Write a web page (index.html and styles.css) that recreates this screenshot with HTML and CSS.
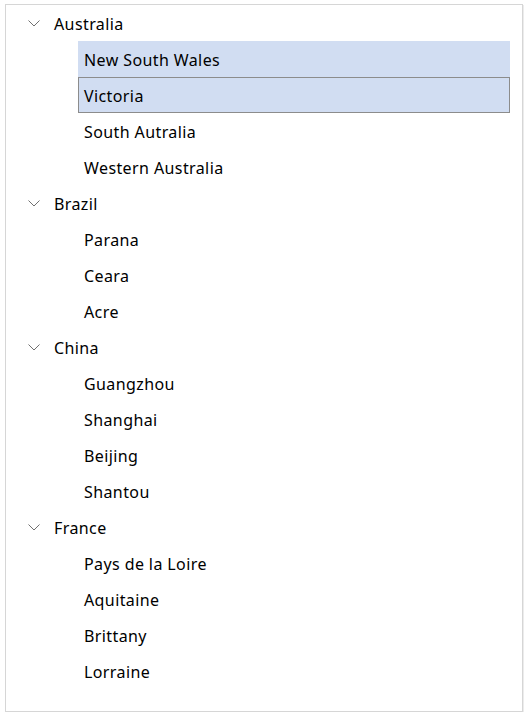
FILE: index.html
```html
<!DOCTYPE html>
<html>
<head>
<meta charset="utf-8">
<link rel="stylesheet" href="styles.css">
</head>
<body>
<div class="tree">
  <div class="group">
    <div class="row head"><svg class="chev" viewBox="0 0 12 7" width="12" height="7"><path d="M0.5 0.5 L6 6 L11.5 0.5" fill="none" stroke="#707070" stroke-width="1"/></svg><span>Australia</span></div>
    <div class="row child selected"><span>New South Wales</span></div>
    <div class="row child selected focused"><span>Victoria</span></div>
    <div class="row child"><span>South Autralia</span></div>
    <div class="row child"><span>Western Australia</span></div>
  </div>
  <div class="group">
    <div class="row head"><svg class="chev" viewBox="0 0 12 7" width="12" height="7"><path d="M0.5 0.5 L6 6 L11.5 0.5" fill="none" stroke="#707070" stroke-width="1"/></svg><span>Brazil</span></div>
    <div class="row child"><span>Parana</span></div>
    <div class="row child"><span>Ceara</span></div>
    <div class="row child"><span>Acre</span></div>
  </div>
  <div class="group">
    <div class="row head"><svg class="chev" viewBox="0 0 12 7" width="12" height="7"><path d="M0.5 0.5 L6 6 L11.5 0.5" fill="none" stroke="#707070" stroke-width="1"/></svg><span>China</span></div>
    <div class="row child"><span>Guangzhou</span></div>
    <div class="row child"><span>Shanghai</span></div>
    <div class="row child"><span>Beijing</span></div>
    <div class="row child"><span>Shantou</span></div>
  </div>
  <div class="group">
    <div class="row head"><svg class="chev" viewBox="0 0 12 7" width="12" height="7"><path d="M0.5 0.5 L6 6 L11.5 0.5" fill="none" stroke="#707070" stroke-width="1"/></svg><span>France</span></div>
    <div class="row child"><span>Pays de la Loire</span></div>
    <div class="row child"><span>Aquitaine</span></div>
    <div class="row child"><span>Brittany</span></div>
    <div class="row child"><span>Lorraine</span></div>
  </div>
</div>
</body>
</html>
```
FILE: styles.css
```css
html, body {
  margin: 0;
  padding: 0;
  background: #ffffff;
}
body {
  padding: 4px 0 0 5px;
  font-family: "Noto Sans", "Open Sans", sans-serif;
  font-size: 16px;
  letter-spacing: 0.4px;
  color: #000000;
}
.tree {
  box-sizing: border-box;
  width: 518px;
  height: 708px;
  border: 1px solid #d6d6d6;
  box-shadow: 1px 1px 0 #ececec;
  display: flex;
  flex-direction: column;
}
.row {
  height: 36px;
  display: flex;
  align-items: center;
  box-sizing: border-box;
  padding-top: 2px;
}
.head {
  padding-left: 22px;
}
.chev {
  display: block;
  margin-right: 14px;
  margin-top: -2px;
}
.child {
  margin-left: 72px;
  margin-right: 12px;
  padding-left: 6px;
}
.selected {
  background: #d1ddf2;
}
.focused {
  border: 1px solid #8c8c8c;
  padding-left: 5px;
  padding-top: 1px;
}
```
